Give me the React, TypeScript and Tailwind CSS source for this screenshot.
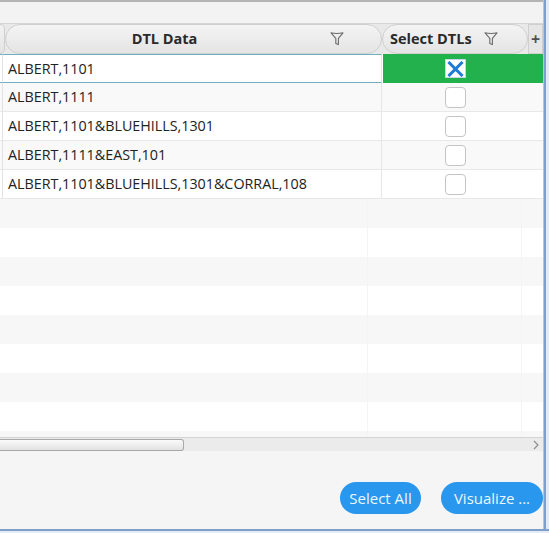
import React from 'react';

const ROWS = [
    'ALBERT,1101',
    'ALBERT,1111',
    'ALBERT,1101&BLUEHILLS,1301',
    'ALBERT,1111&EAST,101',
    'ALBERT,1101&BLUEHILLS,1301&CORRAL,108',
];

const FONT = { fontFamily: '"Open Sans", "Liberation Sans", sans-serif' };

function FilterIcon() {
    return (
        <svg width="14" height="16" viewBox="0 0 14 16" fill="none" stroke="#6b6b6b" strokeWidth={1.1} strokeLinejoin="round">
            <path d="M1 1.8 Q7 3.2 13 1.8 L8.4 7.4 V13.6 L5.8 12.4 V7.4 Z" />
        </svg>
    );
}

function CheckBox({ checked }: { checked?: boolean }) {
    if (checked) {
        return (
            <div className="w-[21px] h-[19px] bg-white border border-[#c7d6e6] flex items-center justify-center">
                <svg width="17" height="16" viewBox="0 0 17 16" stroke="#1f7bd6" strokeWidth={3} strokeLinecap="square">
                    <path d="M2.5 2 L14.5 14 M14.5 2 L2.5 14" />
                </svg>
            </div>
        );
    }
    return <div className="w-[21px] h-[21px] rounded-[4px] border-[1.5px] border-[#c4c4c4] bg-white" />;
}

export default function App() {
    const empties = Array.from({ length: 9 });

    return (
        <div className="w-[549px] h-[533px] flex flex-col bg-[#f5f5f5] overflow-hidden" style={FONT}>
            <div className="flex flex-1 min-h-0">
                {/* main panel */}
                <div className="w-[544px] flex flex-col border-r border-[#c3c3c3]">
                    <div className="h-[2px] bg-[#b4b4b4]" />
                    <div className="h-[21px] bg-[#f3f3f3]" />

                    {/* header */}
                    <div className="h-[31px] flex bg-[#e9e9e9] border-t border-[#d6d6d6]">
                        <div className="w-[5px] h-full rounded-r-full border border-l-0 border-[#cfcfcf] bg-gradient-to-b from-[#f3f3f3] to-[#e3e3e3]" />
                        <div className="w-[377px] h-full flex items-center rounded-full border border-[#cfcfcf] bg-gradient-to-b from-[#f4f4f4] to-[#e4e4e4]">
                            <span className="w-[317px] text-center text-[14.5px] font-bold text-[#2a2a2a]">DTL Data</span>
                            <span className="ml-[7px] flex"><FilterIcon /></span>
                        </div>
                        <div className="w-[146px] h-full flex items-center rounded-full border border-[#cfcfcf] bg-gradient-to-b from-[#f4f4f4] to-[#e4e4e4]">
                            <span className="pl-[7px] text-[14.5px] font-bold text-[#2a2a2a]">Select DTLs</span>
                            <span className="ml-[12px] flex"><FilterIcon /></span>
                        </div>
                        <div className="w-[15px] h-full flex items-center justify-center border border-[#cfcfcf] bg-[#e6e6e6] text-[16px] font-bold text-[#505050] leading-none">+</div>
                    </div>

                    {/* body */}
                    <div className="h-[383px] overflow-hidden bg-white">
                        {ROWS.map((text, i) => {
                            const selected = i === 0;
                            const shade = i % 2 === 1 ? 'bg-[#f9f9f9]' : 'bg-white';
                            return (
                                <div key={text} className={`h-[29px] flex ${shade}`}>
                                    <div className={`w-[3px] h-full border-r border-[#e2e2e2] ${selected ? 'border-y border-y-[#6fb0c0]' : 'border-b border-b-[#e8e8e8]'}`} />
                                    <div
                                        className={`w-[379px] h-full flex items-center pl-[5px] text-[14.3px] text-[#222] border-r border-[#e6e6e6] ${
                                            selected ? 'bg-white border-y border-y-[#6fb0c0]' : 'border-b border-b-[#e8e8e8]'
                                        }`}
                                    >
                                        {text}
                                    </div>
                                    <div className={`relative flex-1 h-full ${selected ? '' : 'border-b border-[#e8e8e8]'}`}>
                                        {selected && (
                                            <div className="absolute left-px right-0 -top-[2px] bottom-0 bg-[#22b14c] rounded-t-[3px]" />
                                        )}
                                        <div className="relative w-[146px] h-full flex items-center justify-center">
                                            <CheckBox checked={selected} />
                                        </div>
                                    </div>
                                </div>
                            );
                        })}
                        {empties.map((_, i) => (
                            <div key={i} className={`h-[29px] flex ${i % 2 === 0 ? 'bg-[#f7f7f7]' : 'bg-white'}`}>
                                <div className="w-[368px] h-full border-r border-[#f4f4f4]" />
                                <div className="w-[154px] h-full border-r border-[#f4f4f4]" />
                                <div className="flex-1 h-full" />
                            </div>
                        ))}
                    </div>

                    {/* horizontal scrollbar */}
                    <div className="h-[14px] flex items-center bg-[#ebebeb] border-t border-[#d4d4d4]">
                        <div className="w-[184px] h-[12px] rounded-r-[3px] border border-l-0 border-[#a8a8a8] bg-gradient-to-b from-[#fafafa] to-[#e2e2e2]" />
                        <div className="flex-1" />
                        <svg width="8" height="10" viewBox="0 0 8 10" fill="none" stroke="#8a8a8a" strokeWidth={1.1} className="mr-[3px]">
                            <path d="M2 1 L6 5 L2 9" />
                        </svg>
                    </div>

                    {/* bottom panel */}
                    <div className="flex-1 flex justify-end items-start pt-[31px] gap-[20px] bg-[#f5f5f5]">
                        <button className="h-[32px] w-[81px] rounded-full bg-[#2a97ee] text-[15px] text-[#eef6fe]">Select All</button>
                        <button className="h-[32px] w-[102px] rounded-full bg-[#2a97ee] text-[15px] text-[#eef6fe]">Visualize ...</button>
                    </div>
                </div>
                <div className="w-[2px] bg-[#7f9fcb]" />
                <div className="w-[3px] bg-[#e4ebf4]" />
            </div>
            <div className="h-[2px] bg-[#7f9fcb]" />
            <div className="h-[2px] bg-[#e4ebf4]" />
        </div>
    );
}
